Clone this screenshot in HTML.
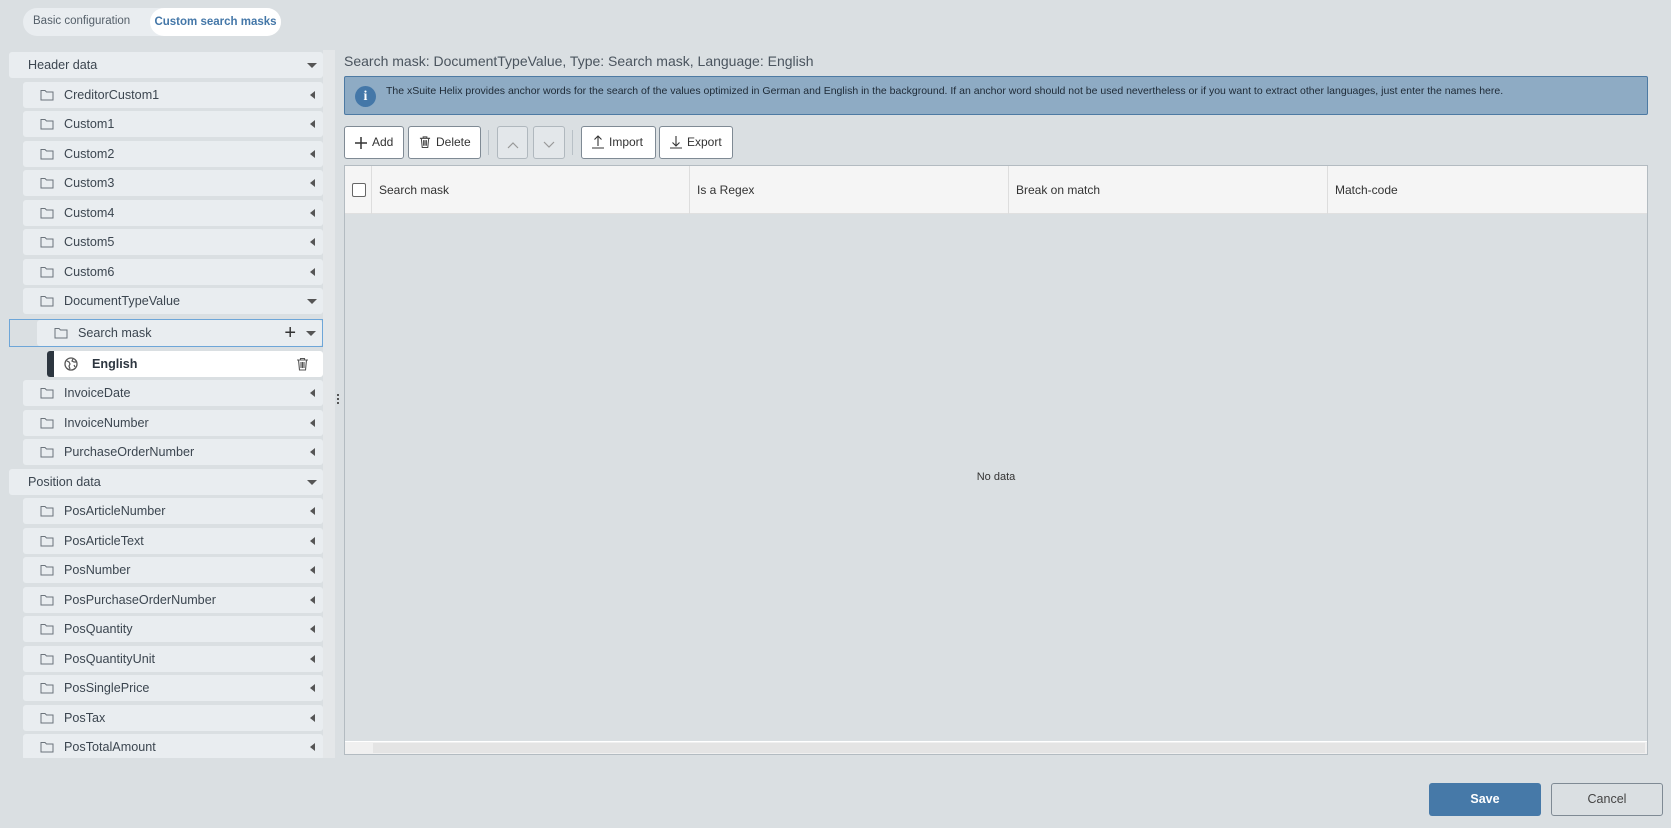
<!DOCTYPE html><html><head><style>
*{box-sizing:border-box;margin:0;padding:0}
body{width:1671px;height:828px;background:#dadfe2;font-family:"Liberation Sans",sans-serif;color:#3c4650;position:relative;overflow:hidden}
.a{position:absolute}
.tabs{left:23px;top:8px;width:258px;height:28px;background:#e9edf0;border-radius:14px}
.tab1{left:33px;top:15px;font-size:11.5px;color:#55606a}
.tab2{left:150px;top:8px;width:131px;height:28px;background:#fff;border-radius:14px;font-size:11.5px;font-weight:bold;color:#4477a8;text-align:center;line-height:28px}
.side{left:9px;top:50px;width:314px;height:708px;overflow:hidden}
.strip{left:323px;top:50px;width:12px;height:708px;background:#e4e7e9}
.row{position:absolute;height:26px;background:#e9edf0;border-radius:3px;font-size:12.6px;line-height:26px;color:#3c4650}
.row svg.f{position:absolute;left:17px;top:6px}
.row .t{position:absolute;left:41px}
.row .ar{position:absolute;right:8px;top:9px;border-top:4px solid transparent;border-bottom:4px solid transparent;border-right:5px solid #555}
.row .dn{position:absolute;right:6px;top:11px;border-left:5px solid transparent;border-right:5px solid transparent;border-top:5px solid #555}
.btn{position:absolute;top:126px;height:33px;background:#fff;border:1px solid #7f8a94;border-radius:3px;font-size:12px;line-height:31px;color:#333;padding-left:10px}
.btn svg{vertical-align:-3px;margin-right:5px}
</style></head><body>
<svg width="0" height="0" style="position:absolute"><defs><symbol id="fo" viewBox="0 0 14 14"><path d="M1 2.5h4l1.5 1.5H13v8H1z" fill="none" stroke="#6b737b" stroke-width="1"/></symbol></defs></svg>
<div class="a tabs"></div><div class="a tab1">Basic configuration</div><div class="a tab2">Custom search masks</div>
<div class="a strip"></div>
<div class="a" style="left:337px;top:394px;width:2px;height:10px;border-left:2px dotted #555"></div>
<div class="a side">
<div class="row" style="left:0;top:2px;width:314px"><span class="t" style="left:19px">Header data</span><span class="dn"></span></div>
<div class="row" style="left:14px;top:32px;width:300px"><svg class="f" width="14" height="14"><use href="#fo"/></svg><span class="t">CreditorCustom1</span><span class="ar"></span></div>
<div class="row" style="left:14px;top:61px;width:300px"><svg class="f" width="14" height="14"><use href="#fo"/></svg><span class="t">Custom1</span><span class="ar"></span></div>
<div class="row" style="left:14px;top:91px;width:300px"><svg class="f" width="14" height="14"><use href="#fo"/></svg><span class="t">Custom2</span><span class="ar"></span></div>
<div class="row" style="left:14px;top:120px;width:300px"><svg class="f" width="14" height="14"><use href="#fo"/></svg><span class="t">Custom3</span><span class="ar"></span></div>
<div class="row" style="left:14px;top:150px;width:300px"><svg class="f" width="14" height="14"><use href="#fo"/></svg><span class="t">Custom4</span><span class="ar"></span></div>
<div class="row" style="left:14px;top:179px;width:300px"><svg class="f" width="14" height="14"><use href="#fo"/></svg><span class="t">Custom5</span><span class="ar"></span></div>
<div class="row" style="left:14px;top:209px;width:300px"><svg class="f" width="14" height="14"><use href="#fo"/></svg><span class="t">Custom6</span><span class="ar"></span></div>
<div class="row" style="left:14px;top:238px;width:300px"><svg class="f" width="14" height="14"><use href="#fo"/></svg><span class="t">DocumentTypeValue</span><span class="dn"></span></div>
<div class="a" style="left:0;top:269px;width:314px;height:28px;border:1px solid #6ea6d8;"></div>
<div class="row" style="left:28px;top:270px;width:285px"><svg class="f" width="14" height="14"><use href="#fo"/></svg><span class="t">Search mask</span><span style="position:absolute;right:26px;top:0;font-size:20px;color:#333">+</span><span class="dn"></span></div>
<div class="row" style="left:38px;top:301px;width:276px;background:#fff"><span style="position:absolute;left:0;top:0;width:7px;height:26px;background:#2d3640;border-radius:3px 0 0 3px"></span>
<svg style="position:absolute;left:17px;top:6px" width="14" height="14" viewBox="0 0 14 14"><circle cx="7" cy="7" r="6" fill="none" stroke="#555" stroke-width="1.3"/><path d="M3 4l2 1 1 2-1 2 1 3M9 2l-1 2 2 1 2 0M10 8l1 2" fill="none" stroke="#555" stroke-width="1.2"/></svg>
<span class="t" style="left:45px;font-weight:bold;color:#2d3640">English</span>
<svg style="position:absolute;right:14px;top:6px" width="13" height="14" viewBox="0 0 13 14"><path d="M1 3h11M4.5 3V1.5h4V3M2.5 3l1 10h6l1-10M5 5v6M6.5 5v6M8 5v6" fill="none" stroke="#555" stroke-width="1.1"/></svg></div>
<div class="row" style="left:14px;top:330px;width:300px"><svg class="f" width="14" height="14"><use href="#fo"/></svg><span class="t">InvoiceDate</span><span class="ar"></span></div>
<div class="row" style="left:14px;top:360px;width:300px"><svg class="f" width="14" height="14"><use href="#fo"/></svg><span class="t">InvoiceNumber</span><span class="ar"></span></div>
<div class="row" style="left:14px;top:389px;width:300px"><svg class="f" width="14" height="14"><use href="#fo"/></svg><span class="t">PurchaseOrderNumber</span><span class="ar"></span></div>
<div class="row" style="left:0;top:419px;width:314px"><span class="t" style="left:19px">Position data</span><span class="dn"></span></div>
<div class="row" style="left:14px;top:448px;width:300px"><svg class="f" width="14" height="14"><use href="#fo"/></svg><span class="t">PosArticleNumber</span><span class="ar"></span></div>
<div class="row" style="left:14px;top:478px;width:300px"><svg class="f" width="14" height="14"><use href="#fo"/></svg><span class="t">PosArticleText</span><span class="ar"></span></div>
<div class="row" style="left:14px;top:507px;width:300px"><svg class="f" width="14" height="14"><use href="#fo"/></svg><span class="t">PosNumber</span><span class="ar"></span></div>
<div class="row" style="left:14px;top:537px;width:300px"><svg class="f" width="14" height="14"><use href="#fo"/></svg><span class="t">PosPurchaseOrderNumber</span><span class="ar"></span></div>
<div class="row" style="left:14px;top:566px;width:300px"><svg class="f" width="14" height="14"><use href="#fo"/></svg><span class="t">PosQuantity</span><span class="ar"></span></div>
<div class="row" style="left:14px;top:596px;width:300px"><svg class="f" width="14" height="14"><use href="#fo"/></svg><span class="t">PosQuantityUnit</span><span class="ar"></span></div>
<div class="row" style="left:14px;top:625px;width:300px"><svg class="f" width="14" height="14"><use href="#fo"/></svg><span class="t">PosSinglePrice</span><span class="ar"></span></div>
<div class="row" style="left:14px;top:655px;width:300px"><svg class="f" width="14" height="14"><use href="#fo"/></svg><span class="t">PosTax</span><span class="ar"></span></div>
<div class="row" style="left:14px;top:684px;width:300px"><svg class="f" width="14" height="14"><use href="#fo"/></svg><span class="t">PosTotalAmount</span><span class="ar"></span></div>
</div>
<div class="a" style="left:344px;top:53px;font-size:14px;color:#4a545e">Search mask: DocumentTypeValue, Type: Search mask, Language: English</div>
<div class="a" style="left:344px;top:76px;width:1304px;height:39px;background:#8eabc4;border:1px solid #4d7aa3;border-radius:2px">
<div class="a" style="left:10px;top:9px;width:21px;height:21px;border-radius:50%;background:#4477a8;color:#fff;font:bold 14px 'Liberation Serif',serif;text-align:center;line-height:21px">i</div>
<div class="a" style="left:41px;top:8px;font-size:10.5px;color:#1e2a36">The xSuite Helix provides anchor words for the search of the values optimized in German and English in the background. If an anchor word should not be used nevertheless or if you want to extract other languages, just enter the names here.</div></div>
<div class="btn" style="left:344px;width:60px"><svg width="12" height="12" viewBox="0 0 12 12"><path d="M6 0v12M0 6h12" stroke="#333" stroke-width="1.5"/></svg>Add</div>
<div class="btn" style="left:408px;width:73px"><svg width="12" height="14" viewBox="0 0 13 14"><path d="M1 3h11M4.5 3V1.5h4V3M2.5 3l1 10h6l1-10M5 5v6M6.5 5v6M8 5v6" fill="none" stroke="#444" stroke-width="1.1"/></svg>Delete</div>
<div class="a" style="left:488px;top:130px;width:1px;height:25px;background:#b8c0c6"></div>
<div class="btn" style="left:497px;width:31px;background:#e3e7ea;border-color:#b0b8be;padding-left:9px"><svg width="12" height="8" viewBox="0 0 12 8"><path d="M1 7l5-5 5 5" fill="none" stroke="#999" stroke-width="1.2"/></svg></div>
<div class="btn" style="left:533px;width:32px;background:#e3e7ea;border-color:#b0b8be;padding-left:9px"><svg width="12" height="8" viewBox="0 0 12 8"><path d="M1 1l5 5 5-5" fill="none" stroke="#999" stroke-width="1.2"/></svg></div>
<div class="a" style="left:572px;top:130px;width:1px;height:25px;background:#b8c0c6"></div>
<div class="btn" style="left:581px;width:75px"><svg width="12" height="14" viewBox="0 0 12 14"><path d="M6 11V1M2.5 4.5L6 1l3.5 3.5M0 13h12" fill="none" stroke="#333" stroke-width="1.1"/></svg>Import</div>
<div class="btn" style="left:659px;width:74px"><svg width="12" height="14" viewBox="0 0 12 14"><path d="M6 1v10M2.5 7.5L6 11l3.5-3.5M0 13h12" fill="none" stroke="#333" stroke-width="1.1"/></svg>Export</div>
<div class="a" style="left:344px;top:165px;width:1304px;height:590px;border:1px solid #b3bbc1;background:#dadfe2">
<div class="a" style="left:0;top:0;width:1302px;height:48px;background:#f5f5f5;border-bottom:1px solid #e0e0e0;font-size:12px;line-height:48px;color:#333">
<div class="a" style="left:7px;top:17px;width:14px;height:14px;border:1px solid #666;border-radius:2px;background:#fff"></div>
<div class="a" style="left:26px;top:0;height:48px;border-left:1px solid #ddd;padding-left:7px">Search mask</div>
<div class="a" style="left:344px;top:0;height:48px;border-left:1px solid #ddd;padding-left:7px">Is a Regex</div>
<div class="a" style="left:663px;top:0;height:48px;border-left:1px solid #ddd;padding-left:7px">Break on match</div>
<div class="a" style="left:982px;top:0;height:48px;border-left:1px solid #ddd;padding-left:7px">Match-code</div></div>
<div class="a" style="left:0;top:305px;width:1302px;text-align:center;font-size:11px;color:#333">No data</div>
<div class="a" style="left:0;top:575px;width:1302px;height:13px;background:#f0f0f0;border-top:1px solid #fff"><div class="a" style="left:28px;top:1px;width:1272px;height:10px;background:#e4e4e4"></div></div>
</div>
<div class="a" style="left:1429px;top:783px;width:112px;height:33px;background:#4679a8;border-radius:3px;color:#fff;font-weight:bold;font-size:12.5px;text-align:center;line-height:33px">Save</div>
<div class="a" style="left:1551px;top:783px;width:112px;height:33px;border:1px solid #7f8a94;border-radius:3px;color:#444;font-size:12.5px;text-align:center;line-height:31px">Cancel</div>
</body></html>
